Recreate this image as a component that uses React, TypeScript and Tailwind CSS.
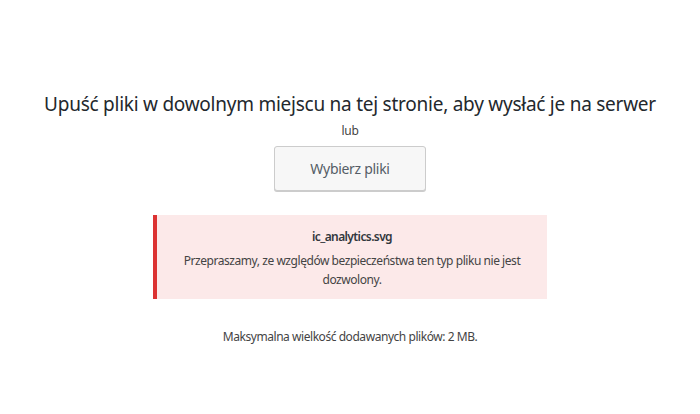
export default function App() {
  return (
    <div
      className="w-[700px] h-[414px] bg-white flex flex-col items-center pt-[90px]"
      style={{ fontFamily: '"Noto Sans", "Open Sans", sans-serif' }}
    >
      <h1 className="text-[19px] leading-[28px] tracking-[-0.25px] text-[#23282d] font-normal whitespace-nowrap">
        Upuść pliki w dowolnym miejscu na tej stronie, aby wysłać je na serwer
      </h1>
      <p className="mt-[3px] text-[12px] leading-[19px] tracking-[-0.3px] text-[#444]">lub</p>
      <button className="mt-[6px] w-[152px] h-[45px] bg-[#f7f7f7] border border-[#cccccc] rounded-[3px] shadow-[0_1px_0_#cccccc] text-[14px] tracking-[-0.3px] text-[#555d66]">
        Wybierz pliki
      </button>
      <div className="mt-[24px] w-[394px] h-[84px] bg-[#fce9e9] border-l-4 border-[#dc3232] flex flex-col items-center pt-[12px] px-[12px] text-center">
        <p className="text-[12px] leading-[19px] tracking-[-0.6px] font-semibold text-[#32373c]">ic_analytics.svg</p>
        <p className="mt-[5px] text-[12px] leading-[19px] tracking-[-0.45px] text-[#444]">
          Przepraszamy, ze względów bezpieczeństwa ten typ pliku nie jest dozwolony.
        </p>
      </div>
      <p className="mt-[28px] text-[12px] leading-[19px] tracking-[-0.45px] text-[#444]">
        Maksymalna wielkość dodawanych plików: 2 MB.
      </p>
    </div>
  );
}
